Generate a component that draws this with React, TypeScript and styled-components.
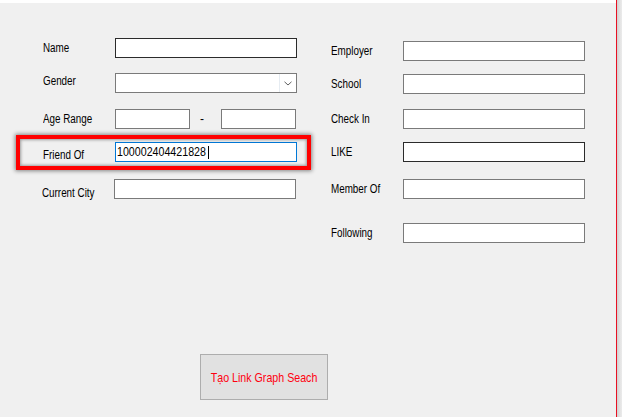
import React from 'react';
import styled, { createGlobalStyle } from 'styled-components';

const Global = createGlobalStyle`
  html, body {
    margin: 0;
    padding: 0;
    height: 100%;
    background: #f0f0f0;
    overflow: hidden;
  }
  body {
    font-family: "Liberation Sans", Arial, sans-serif;
    color: #000;
  }
`;

const Window = styled.div`
  display: flex;
  width: 100vw;
  height: 100vh;
`;

const Panel = styled.div`
  width: 616px;
  flex: none;
  display: flex;
  flex-direction: column;
  background: #f0f0f0;
`;

const TopStrip = styled.div`
  height: 3px;
  flex: none;
  background: #ffffff;
`;

const RedEdge = styled.div`
  width: 1px;
  flex: none;
  background: #e81123;
`;

const GrayEdge = styled.div`
  flex: 1;
  background: linear-gradient(to right, #cfcfcf, #e4e4e4 60%, #ebebeb);
`;

const Columns = styled.div`
  display: flex;
  align-items: flex-start;
  gap: 34px;
  padding: 35px 0 0 43px;
`;

const Column = styled.div<{ $top: number }>`
  display: flex;
  flex-direction: column;
  margin-top: ${(p) => p.$top}px;
`;

const Row = styled.div<{ $gap: number; $shift?: number }>`
  position: relative;
  display: flex;
  align-items: flex-start;
  height: 20px;
  margin-top: ${(p) => p.$gap}px;
  margin-left: ${(p) => p.$shift ?? 0}px;
`;

const Highlight = styled.div`
  position: absolute;
  left: -27px;
  top: -7px;
  width: 295px;
  height: 35px;
  box-sizing: border-box;
  border: 4px solid #ff0000;
  box-shadow: 0 0 4px 1px rgba(0, 0, 0, 0.45), inset 0 0 3px 1px rgba(0, 0, 0, 0.35);
  pointer-events: none;
`;

/* WinForms' condensed sans look: Arial metrics narrowed horizontally */
const Narrow = styled.span<{ $origin?: string; $trim?: number }>`
  display: inline-block;
  white-space: nowrap;
  transform: scaleX(0.82);
  transform-origin: ${(p) => p.$origin ?? 'left center'};
  margin-right: ${(p) => -(p.$trim ?? 0)}px;
`;

const Label = styled.span<{ $dy?: number }>`
  width: 72px;
  flex: none;
  font-size: 12px;
  line-height: 20px;
  margin-top: ${(p) => p.$dy ?? 0}px;
  white-space: nowrap;
`;

const borderTones = {
  idle: '#7a7a7a',
  hover: '#2b2b2b',
  focus: '#0078d7',
};

const Field = styled.div<{ $w?: number; $tone?: keyof typeof borderTones }>`
  box-sizing: border-box;
  width: ${(p) => p.$w ?? 182}px;
  height: 20px;
  flex: none;
  display: flex;
  align-items: center;
  padding-left: 1px;
  background: #ffffff;
  border: 1px solid ${(p) => borderTones[p.$tone ?? 'idle']};
  font-size: 13px;
  line-height: 16px;
  color: #000;
  overflow: hidden;
`;

const Caret = styled.span`
  width: 1px;
  height: 13px;
  margin-left: 2px;
  flex: none;
  background: #000;
`;

const Combo = styled.div`
  box-sizing: border-box;
  width: 182px;
  height: 20px;
  flex: none;
  display: flex;
  justify-content: flex-end;
  background: #ffffff;
  border: 1px solid #7a7a7a;
`;

const ComboButton = styled.div`
  width: 16px;
  display: flex;
  align-items: center;
  justify-content: center;
  border-left: 1px solid #e6ecf2;
`;

const Dash = styled.span`
  width: 31px;
  flex: none;
  box-sizing: border-box;
  padding-left: 10px;
  font-size: 12px;
  line-height: 20px;
`;

const ButtonBar = styled.div`
  display: flex;
  padding-left: 200px;
  margin-top: 111px;
`;

const ActionButton = styled.button`
  box-sizing: border-box;
  width: 128px;
  height: 46px;
  padding: 0;
  display: flex;
  align-items: center;
  justify-content: center;
  overflow: hidden;
  background: #e1e1e1;
  border: 1px solid #adadad;
  font-family: "Liberation Sans", Arial, sans-serif;
  font-size: 13px;
  color: #ff0010;
`;

const Chevron = () => (
  <svg width="8" height="5" viewBox="0 0 8 5" aria-hidden>
    <path d="M0.5 0.8 L4 4 L7.5 0.8" fill="none" stroke="#606060" strokeWidth="1" />
  </svg>
);

const L = ({ children, dy }: { children: React.ReactNode; dy?: number }) => (
  <Label $dy={dy}>
    <Narrow>{children}</Narrow>
  </Label>
);

const friendValue = '100002404421828';
/* width given back by the 0.82 horizontal scale: 15 digits x 0.556em x 13px x 0.18 */
const friendTrim = friendValue.length * 0.556 * 13 * 0.18;

export default function App() {
  return (
    <>
      <Global />
      <Window>
        <Panel>
          <TopStrip />
          <Columns>
            <Column $top={0}>
              <Row $gap={0}>
                <L>Name</L>
                <Field $tone="hover" />
              </Row>
              <Row $gap={15}>
                <L dy={-2.5}>Gender</L>
                <Combo>
                  <ComboButton>
                    <Chevron />
                  </ComboButton>
                </Combo>
              </Row>
              <Row $gap={16}>
                <L>Age Range</L>
                <Field $w={75} />
                <Dash>-</Dash>
                <Field $w={75} />
              </Row>
              <Row $gap={13}>
                <Highlight />
                <L dy={3}>Friend Of</L>
                <Field $tone="focus">
                  <Narrow $trim={friendTrim}>{friendValue}</Narrow>
                  <Caret />
                </Field>
              </Row>
              <Row $gap={17} $shift={-1}>
                <L dy={3.5}>Current City</L>
                <Field />
              </Row>
            </Column>
            <Column $top={3}>
              <Row $gap={0}>
                <L>Employer</L>
                <Field />
              </Row>
              <Row $gap={13}>
                <L>School</L>
                <Field />
              </Row>
              <Row $gap={15}>
                <L>Check In</L>
                <Field />
              </Row>
              <Row $gap={13}>
                <L>LIKE</L>
                <Field $tone="hover" />
              </Row>
              <Row $gap={17}>
                <L>Member Of</L>
                <Field />
              </Row>
              <Row $gap={24}>
                <L>Following</L>
                <Field />
              </Row>
            </Column>
          </Columns>
          <ButtonBar>
            <ActionButton>
              <Narrow $origin="center">Tạo Link Graph Seach</Narrow>
            </ActionButton>
          </ButtonBar>
        </Panel>
        <RedEdge />
        <GrayEdge />
      </Window>
    </>
  );
}
